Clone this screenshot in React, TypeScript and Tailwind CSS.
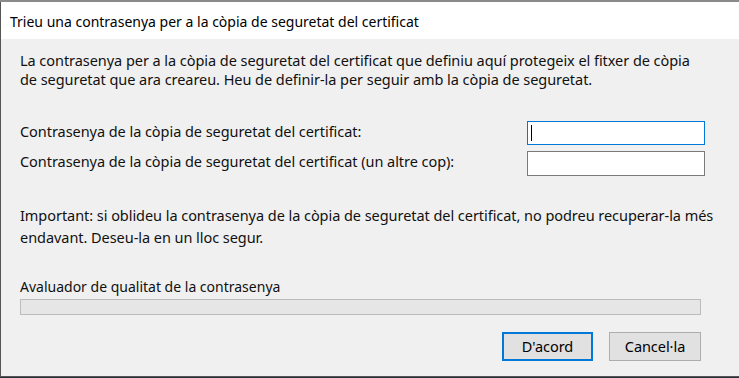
export default function App() {
  const font = { fontFamily: '"Noto Sans", "Segoe UI", sans-serif' };
  return (
    <div className="w-[739px] h-[378px] bg-[#2a2f3a] overflow-hidden" style={font}>
      <div className="h-[2px] bg-[#8a8a8a]" />
      <div className="w-[739px] h-[375px] border-l border-b border-[#555555] bg-[#f0f0f0] flex flex-col">
        <div className="h-[37px] bg-white flex items-center pl-[9px] pt-[2px] text-[14px] text-black">
          Trieu una contrasenya per a la còpia de seguretat del certificat
        </div>
        <div className="flex flex-col pl-[19px] pr-[34px] text-[14.5px] tracking-[-0.05px] text-[#111111]">
          <p className="mt-[12px] leading-[19px] whitespace-nowrap">
            La contrasenya per a la còpia de seguretat del certificat que definiu aquí protegeix el fitxer de còpia
            <br />
            de seguretat que ara creareu. Heu de definir-la per seguir amb la còpia de seguretat.
          </p>
          <div className="mt-[32px] flex items-center justify-between h-[24px]">
            <span className="-mt-[3px]">Contrasenya de la còpia de seguretat del certificat:</span>
            <div className="w-[178px] h-[24px] bg-white border border-[#0078d7] flex items-center pl-[3px]">
              <div className="w-px h-[16px] bg-black" />
            </div>
          </div>
          <div className="mt-[6px] flex items-center justify-between h-[25px]">
            <span className="-mt-[3px]">Contrasenya de la còpia de seguretat del certificat (un altre cop):</span>
            <div className="w-[178px] h-[25px] bg-white border border-[#7a7a7a]" />
          </div>
          <p className="mt-[28px] leading-[22px] whitespace-nowrap">
            Important: si oblideu la contrasenya de la còpia de seguretat del certificat, no podreu recuperar-la més
            <br />
            endavant. Deseu-la en un lloc segur.
          </p>
          <div className="mt-[30px] leading-[18px] text-[14px] tracking-normal">Avaluador de qualitat de la contrasenya</div>
          <div className="mt-[3px] mr-[4px] h-[16px] bg-[#e6e6e6] border border-[#bcbcbc]" />
          <div className="mt-[17px] flex justify-end gap-[16px] mr-[4px]">
            <button className="w-[91px] h-[29px] bg-[#e1e1e1] border-2 border-[#0078d7] text-black">
              D'acord
            </button>
            <button className="w-[92px] h-[29px] bg-[#e1e1e1] border border-[#adadad] text-black">
              Cancel·la
            </button>
          </div>
        </div>
      </div>
    </div>
  );
}
